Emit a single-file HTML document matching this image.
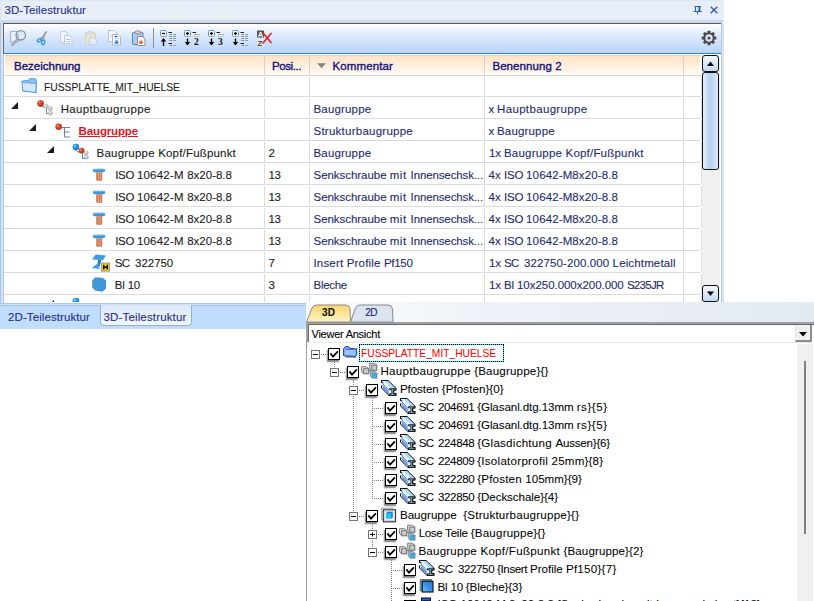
<!DOCTYPE html>
<html><head><meta charset="utf-8"><title>3D-Teilestruktur</title><style>
html,body{margin:0;padding:0;background:#fff;}
body{width:814px;height:601px;position:relative;overflow:hidden;font-family:"Liberation Sans",sans-serif;}
.t{position:absolute;white-space:pre;line-height:14px;height:14px;}
.ic{position:absolute;width:16px;height:16px;}
</style></head><body>
<svg width="0" height="0" style="position:absolute"><defs><linearGradient id="cy" x1="0" y1="1" x2="1" y2="0"><stop offset="0" stop-color="#08f0f0"/><stop offset=".55" stop-color="#30a8f4"/><stop offset="1" stop-color="#3a8cf0"/></linearGradient><linearGradient id="shg" x1="0" y1="1" x2="1" y2="0"><stop offset="0" stop-color="#62d6fa"/><stop offset=".5" stop-color="#3a8fe6"/><stop offset="1" stop-color="#2e78dc"/></linearGradient></defs></svg><div style="position:absolute;left:0px;top:0px;width:724px;height:304px;background:#e8eef7;"></div>
<div style="position:absolute;left:0px;top:0px;width:724px;height:1px;background:#dce6f4;"></div>
<div style="position:absolute;left:0px;top:20px;width:724px;height:3px;background:#c9daf0;"></div>
<div style="position:absolute;left:0px;top:1px;width:1px;height:22px;background:#dbe5f3;"></div>
<div style="position:absolute;left:0px;top:23px;width:1px;height:281px;background:#b0c8e8;"></div>
<div style="position:absolute;left:1px;top:23px;width:1px;height:281px;background:#cfdff0;"></div>
<div style="position:absolute;left:2px;top:23px;width:1px;height:281px;background:#dce9f8;"></div>
<div style="position:absolute;left:3px;top:23px;width:1px;height:281px;background:#a9cbe8;"></div>
<div style="position:absolute;left:721px;top:20px;width:1px;height:284px;background:#b0cdee;"></div>
<div style="position:absolute;left:722px;top:20px;width:2px;height:284px;background:#d5e2f0;"></div>
<div style="position:absolute;left:3px;top:23px;width:718px;height:31px;background:linear-gradient(#ffffff 0%,#e9f1fd 25%,#d3e3fa 55%,#b9d6fb 100%);border-top:1px solid #5a5a5a;border-left:1px solid #666;border-bottom:1px solid #3f7fb5;box-sizing:border-box;"></div>
<div style="position:absolute;left:4px;top:54px;width:717px;height:250px;background:#fff;"></div>
<div style="position:absolute;left:5px;top:55px;width:695px;height:20px;background:linear-gradient(#ffe2c4 0%,#fff0e0 55%,#fffaf5 100%);border-top:1px solid #d4d4d4;box-sizing:border-box;"></div>
<div style="position:absolute;left:264px;top:56px;width:1px;height:19px;background:#d6d2cc;"></div>
<div style="position:absolute;left:309px;top:56px;width:1px;height:19px;background:#d6d2cc;"></div>
<div style="position:absolute;left:484px;top:56px;width:1px;height:19px;background:#d6d2cc;"></div>
<div style="position:absolute;left:683px;top:56px;width:1px;height:19px;background:#d6d2cc;"></div>
<div style="position:absolute;left:4px;top:75px;width:697px;height:1px;background:#d9d9d9;"></div>
<div style="position:absolute;left:4px;top:96px;width:697px;height:1px;background:#dcdcdc;"></div>
<div style="position:absolute;left:4px;top:118px;width:697px;height:1px;background:#dcdcdc;"></div>
<div style="position:absolute;left:4px;top:140px;width:697px;height:1px;background:#dcdcdc;"></div>
<div style="position:absolute;left:4px;top:162px;width:697px;height:1px;background:#dcdcdc;"></div>
<div style="position:absolute;left:4px;top:184px;width:697px;height:1px;background:#dcdcdc;"></div>
<div style="position:absolute;left:4px;top:206px;width:697px;height:1px;background:#dcdcdc;"></div>
<div style="position:absolute;left:4px;top:228px;width:697px;height:1px;background:#dcdcdc;"></div>
<div style="position:absolute;left:4px;top:250px;width:697px;height:1px;background:#dcdcdc;"></div>
<div style="position:absolute;left:4px;top:272px;width:697px;height:1px;background:#dcdcdc;"></div>
<div style="position:absolute;left:4px;top:294px;width:697px;height:1px;background:#dcdcdc;"></div>
<div style="position:absolute;left:264px;top:77px;width:1px;height:19px;background:#dcdcdc;"></div>
<div style="position:absolute;left:309px;top:77px;width:1px;height:19px;background:#dcdcdc;"></div>
<div style="position:absolute;left:484px;top:77px;width:1px;height:19px;background:#dcdcdc;"></div>
<div style="position:absolute;left:683px;top:77px;width:1px;height:19px;background:#dcdcdc;"></div>
<div style="position:absolute;left:701px;top:77px;width:1px;height:19px;background:#dcdcdc;"></div>
<div style="position:absolute;left:264px;top:98px;width:1px;height:20px;background:#dcdcdc;"></div>
<div style="position:absolute;left:309px;top:98px;width:1px;height:20px;background:#dcdcdc;"></div>
<div style="position:absolute;left:484px;top:98px;width:1px;height:20px;background:#dcdcdc;"></div>
<div style="position:absolute;left:683px;top:98px;width:1px;height:20px;background:#dcdcdc;"></div>
<div style="position:absolute;left:701px;top:98px;width:1px;height:20px;background:#dcdcdc;"></div>
<div style="position:absolute;left:264px;top:120px;width:1px;height:20px;background:#dcdcdc;"></div>
<div style="position:absolute;left:309px;top:120px;width:1px;height:20px;background:#dcdcdc;"></div>
<div style="position:absolute;left:484px;top:120px;width:1px;height:20px;background:#dcdcdc;"></div>
<div style="position:absolute;left:683px;top:120px;width:1px;height:20px;background:#dcdcdc;"></div>
<div style="position:absolute;left:701px;top:120px;width:1px;height:20px;background:#dcdcdc;"></div>
<div style="position:absolute;left:264px;top:142px;width:1px;height:20px;background:#dcdcdc;"></div>
<div style="position:absolute;left:309px;top:142px;width:1px;height:20px;background:#dcdcdc;"></div>
<div style="position:absolute;left:484px;top:142px;width:1px;height:20px;background:#dcdcdc;"></div>
<div style="position:absolute;left:683px;top:142px;width:1px;height:20px;background:#dcdcdc;"></div>
<div style="position:absolute;left:701px;top:142px;width:1px;height:20px;background:#dcdcdc;"></div>
<div style="position:absolute;left:264px;top:164px;width:1px;height:20px;background:#dcdcdc;"></div>
<div style="position:absolute;left:309px;top:164px;width:1px;height:20px;background:#dcdcdc;"></div>
<div style="position:absolute;left:484px;top:164px;width:1px;height:20px;background:#dcdcdc;"></div>
<div style="position:absolute;left:683px;top:164px;width:1px;height:20px;background:#dcdcdc;"></div>
<div style="position:absolute;left:701px;top:164px;width:1px;height:20px;background:#dcdcdc;"></div>
<div style="position:absolute;left:264px;top:186px;width:1px;height:20px;background:#dcdcdc;"></div>
<div style="position:absolute;left:309px;top:186px;width:1px;height:20px;background:#dcdcdc;"></div>
<div style="position:absolute;left:484px;top:186px;width:1px;height:20px;background:#dcdcdc;"></div>
<div style="position:absolute;left:683px;top:186px;width:1px;height:20px;background:#dcdcdc;"></div>
<div style="position:absolute;left:701px;top:186px;width:1px;height:20px;background:#dcdcdc;"></div>
<div style="position:absolute;left:264px;top:208px;width:1px;height:20px;background:#dcdcdc;"></div>
<div style="position:absolute;left:309px;top:208px;width:1px;height:20px;background:#dcdcdc;"></div>
<div style="position:absolute;left:484px;top:208px;width:1px;height:20px;background:#dcdcdc;"></div>
<div style="position:absolute;left:683px;top:208px;width:1px;height:20px;background:#dcdcdc;"></div>
<div style="position:absolute;left:701px;top:208px;width:1px;height:20px;background:#dcdcdc;"></div>
<div style="position:absolute;left:264px;top:230px;width:1px;height:20px;background:#dcdcdc;"></div>
<div style="position:absolute;left:309px;top:230px;width:1px;height:20px;background:#dcdcdc;"></div>
<div style="position:absolute;left:484px;top:230px;width:1px;height:20px;background:#dcdcdc;"></div>
<div style="position:absolute;left:683px;top:230px;width:1px;height:20px;background:#dcdcdc;"></div>
<div style="position:absolute;left:701px;top:230px;width:1px;height:20px;background:#dcdcdc;"></div>
<div style="position:absolute;left:264px;top:252px;width:1px;height:20px;background:#dcdcdc;"></div>
<div style="position:absolute;left:309px;top:252px;width:1px;height:20px;background:#dcdcdc;"></div>
<div style="position:absolute;left:484px;top:252px;width:1px;height:20px;background:#dcdcdc;"></div>
<div style="position:absolute;left:683px;top:252px;width:1px;height:20px;background:#dcdcdc;"></div>
<div style="position:absolute;left:701px;top:252px;width:1px;height:20px;background:#dcdcdc;"></div>
<div style="position:absolute;left:264px;top:274px;width:1px;height:20px;background:#dcdcdc;"></div>
<div style="position:absolute;left:309px;top:274px;width:1px;height:20px;background:#dcdcdc;"></div>
<div style="position:absolute;left:484px;top:274px;width:1px;height:20px;background:#dcdcdc;"></div>
<div style="position:absolute;left:683px;top:274px;width:1px;height:20px;background:#dcdcdc;"></div>
<div style="position:absolute;left:701px;top:274px;width:1px;height:20px;background:#dcdcdc;"></div>
<div style="position:absolute;left:264px;top:296px;width:1px;height:6px;background:#dcdcdc;"></div>
<div style="position:absolute;left:309px;top:296px;width:1px;height:6px;background:#dcdcdc;"></div>
<div style="position:absolute;left:484px;top:296px;width:1px;height:6px;background:#dcdcdc;"></div>
<div style="position:absolute;left:683px;top:296px;width:1px;height:6px;background:#dcdcdc;"></div>
<div style="position:absolute;left:701px;top:296px;width:1px;height:6px;background:#dcdcdc;"></div>
<div style="position:absolute;left:702px;top:55px;width:18px;height:249px;background:#f0f0f0;"></div>
<div style="position:absolute;left:702px;top:55px;width:17px;height:17px;background:linear-gradient(#f4f8fe,#c4d8f2);border:1.5px solid #111;border-radius:3px;box-sizing:border-box;"></div>
<div style="position:absolute;left:702px;top:72px;width:17px;height:98px;background:linear-gradient(90deg,#e6f0fc,#b4cfee 45%,#dce9fa);border:1.5px solid #111;border-radius:3px;box-sizing:border-box;"></div>
<div style="position:absolute;left:702px;top:285px;width:17px;height:17px;background:linear-gradient(#f4f8fe,#c4d8f2);border:1.5px solid #111;border-radius:3px;box-sizing:border-box;"></div>
<svg style="position:absolute;left:702px;top:55px" width="17" height="17"><path d="M5 11 L12 11 L8.5 6.5 Z" fill="#000"/></svg>
<svg style="position:absolute;left:702px;top:285px" width="17" height="17"><path d="M5 6.5 L12 6.5 L8.5 11 Z" fill="#000"/></svg>
<div style="position:absolute;left:0px;top:303px;width:306px;height:26px;background:#c0dcff;"></div>
<div style="position:absolute;left:0px;top:303px;width:306px;height:1px;background:#a9cbe8;"></div>
<div style="position:absolute;left:0px;top:304px;width:306px;height:1px;background:#d0e2f4;"></div>
<div style="position:absolute;left:0px;top:305px;width:306px;height:1px;background:#a4c4ea;"></div>
<div style="position:absolute;left:100px;top:305px;width:92px;height:21px;background:linear-gradient(#dbe7f7,#f2f6fc);border:1px solid #8fb0da;border-top:none;border-radius:0 0 4px 4px;box-sizing:border-box;"></div>
<div style="position:absolute;left:306px;top:302px;width:508px;height:20px;background:linear-gradient(90deg,#fbfcfe 0%,#eef2f8 35%,#e3e9f3 100%);"></div>
<div style="position:absolute;left:308px;top:325px;width:506px;height:276px;background:#fff;"></div>
<div style="position:absolute;left:306px;top:322px;width:508px;height:2px;background:#a0a0a0;"></div>
<div style="position:absolute;left:308px;top:324px;width:506px;height:1px;background:#696969;"></div>
<div style="position:absolute;left:306px;top:322px;width:2px;height:20px;background:#a0a0a0;"></div>
<div style="position:absolute;left:308px;top:324px;width:1px;height:18px;background:#696969;"></div>
<div style="position:absolute;left:306px;top:342px;width:1px;height:259px;background:#a0a0a0;"></div>
<div style="position:absolute;left:307px;top:342px;width:507px;height:259px;background:#fff;"></div>
<div style="position:absolute;left:309px;top:342px;width:503px;height:1px;background:#e6e6e6;"></div>
<div style="position:absolute;left:795px;top:325px;width:17px;height:17px;background:#f0f0f0;border-right:2px solid #8c8c8c;border-bottom:2px solid #8c8c8c;border-left:1px solid #e3e3e3;box-sizing:border-box;"></div>
<svg style="position:absolute;left:795px;top:325px" width="16" height="17"><path d="M4 7 L12 7 L8 11.5 Z" fill="#000"/></svg>
<div style="position:absolute;left:797px;top:344px;width:16px;height:257px;background:#f0f0f0;"></div>
<div style="position:absolute;left:804px;top:361px;width:2px;height:173px;background:#808080;"></div>
<svg style="position:absolute;left:306px;top:302px" width="100" height="21">
<defs><linearGradient id="g3" x1="0" y1="0" x2="0" y2="1"><stop offset="0" stop-color="#fbd56a"/><stop offset="1" stop-color="#fff3c8"/></linearGradient></defs>
<path d="M44.5 20 L49.5 6 Q50.5 3 54 3 L82 3 Q86 3 86.5 7 L87 20 Z" fill="#dbe4f1" stroke="#8a8a8a" stroke-width="1"/>
<path d="M0.5 20 L6 6 Q7 3 10.5 3 L40 3 Q43.5 3 44 7 L44.5 20 Z" fill="url(#g3)" stroke="#8a8a8a" stroke-width="1"/>
</svg>
<svg style="position:absolute;left:10px;top:30px;overflow:visible" width="16" height="16" viewBox="0 0 16 16" ><rect x="0.5" y="1.5" width="8" height="10.5" fill="#e6eefb" stroke="#9fb3de" stroke-width="1"/><circle cx="10.800" cy="5.300" r="4.700" fill="#dce9fb" fill-opacity=".75" stroke="#8c8c8c" stroke-width="1.3"/><path d="M8 4 V8" stroke="#7f9fe0" stroke-width="1"/><path d="M7.2 9.4 L2.4 15" stroke="#8a8a8a" stroke-width="2.2" stroke-linecap="round"/><path d="M7.2 9.4 L2.4 15" stroke="#d8d8d8" stroke-width=".8" stroke-linecap="round"/></svg>
<svg style="position:absolute;left:34px;top:30px;overflow:visible" width="16" height="16" viewBox="0 0 16 16" ><path d="M12.600 1.300 L6.900 9.800" stroke="#8d8d8d" stroke-width="1.500"/><path d="M10.900 2.800 L9.600 10.300" stroke="#a2a2a2" stroke-width="1.200"/><ellipse cx="5.400" cy="10.200" rx="2.300" ry="1.400" transform="rotate(-28 5.400 10.200)" fill="none" stroke="#2f93d8" stroke-width="1.300"/><ellipse cx="9.200" cy="12.400" rx="1.500" ry="2.300" transform="rotate(14 9.200 12.400)" fill="none" stroke="#2f93d8" stroke-width="1.300"/></svg>
<svg style="position:absolute;left:58px;top:30px;overflow:visible" width="16" height="16" viewBox="0 0 16 16" ><path d="M2.5 1.5 h5 l2.5 2.5 v8 h-7.5z" fill="#f1f4fa" stroke="#c6cfde"/><path d="M6.5 5.5 h5 l2.5 2.5 v7 h-7.5z" fill="#f6f8fc" stroke="#c2cbdb"/><path d="M8 9.5h4.5M8 11.5h4.5M8 13.5h4.5" stroke="#b7c7e3" stroke-width="1"/></svg>
<svg style="position:absolute;left:82px;top:30px;overflow:visible" width="16" height="16" viewBox="0 0 16 16" ><rect x="3.5" y="2.5" width="10" height="11.5" rx="1" fill="#e9e4d2" stroke="#d8d2bd"/><rect x="6" y="1.2" width="5" height="2.6" rx="1" fill="#dfe5ee" stroke="#c8d0dc" stroke-width=".8"/><path d="M7.5 7.5 h4.5 l2.5 2.5 v4.5 h-7z" fill="#e6ecf7" stroke="#c9d3e6"/></svg>
<svg style="position:absolute;left:106px;top:30px;overflow:visible" width="16" height="16" viewBox="0 0 16 16" ><path d="M2.5 0.5 h5.5 l2.5 2.5 v8.5 h-8z" fill="#f8fafd" stroke="#b8c2d4"/><path d="M4 4.5h4M4 6.5h4" stroke="#c8d6ee"/><path d="M6.5 4.5 h5.5 l2.500 2.5 v8 h-8z" fill="#fdfdfe" stroke="#aeb9cd"/><path d="M8.5 6.5h3" stroke="#2a50b8" stroke-width="1.3"/><path d="M8.5 8.5h4.5" stroke="#c2d3ee"/><circle cx="10.5" cy="12.2" r="1.900" fill="#1f8fd6"/><circle cx="10" cy="11.4" r=".9" fill="#6cc1f0"/></svg>
<svg style="position:absolute;left:130px;top:30px;overflow:visible" width="16" height="16" viewBox="0 0 16 16" ><rect x="2.500" y="2.5" width="10.5" height="12" rx="1.2" fill="#a9c9f3" stroke="#4a86c8"/><rect x="5" y="1" width="5.5" height="2.8" rx="1" fill="#e6d9c8" stroke="#8c7a66" stroke-width=".8"/><path d="M7.5 6.5 h5 l2.500 2.5 v6.5 h-7.5z" fill="#fdfdfd" stroke="#9d8f88"/><circle cx="11" cy="12.200" r="1.800" fill="#e2561e"/><circle cx="10.5" cy="11.4" r=".8" fill="#f59a6a"/></svg>
<div style="position:absolute;left:153px;top:28px;width:1px;height:20px;background:#8d8d8d;"></div>
<svg style="position:absolute;left:160px;top:30px;overflow:visible" width="16" height="16" viewBox="0 0 16 16" ><rect x="0.5" y="0.5" width="6" height="6" rx="1" fill="#fff" stroke="#5b9bd5"/><path d="M0.8 5.8h5.4" stroke="#e6d9a8" stroke-width=".8"/><path d="M2 3.500h3" stroke="#000" stroke-width="1.3"/><path d="M3.500 16V9.500" stroke="#000" stroke-width="1.400"/><path d="M0.8 11.600L3.500 8L6.200 11.600z" fill="#000"/><path d="M8.5 2.500h3.500" stroke="#222" stroke-width="1"/><path d="M9.5 4.5h2.500" stroke="#8f80ac" stroke-width="1"/><path d="M13 4.5h3" stroke="#80a893" stroke-width="1"/><path d="M9.5 6.5h2.500" stroke="#8f80ac" stroke-width="1"/><path d="M13 6.5h3" stroke="#80a893" stroke-width="1"/><path d="M9.5 8.5h2.500" stroke="#8f80ac" stroke-width="1"/><path d="M13 8.5h3" stroke="#80a893" stroke-width="1"/><path d="M9.5 10.5h2.500" stroke="#8f80ac" stroke-width="1"/><path d="M13 10.5h3" stroke="#80a893" stroke-width="1"/><path d="M8.5 13.500h3.500" stroke="#222" stroke-width="1"/><path d="M9.5 15.5h2.500" stroke="#8f80ac" stroke-width="1"/><path d="M13 15.5h3" stroke="#8b9fc8" stroke-width="1"/></svg>
<svg style="position:absolute;left:184px;top:30px;overflow:visible" width="16" height="16" viewBox="0 0 16 16" ><rect x="0.5" y="0.5" width="6" height="6" rx="1" fill="#fff" stroke="#5b9bd5"/><path d="M0.8 5.8h5.4" stroke="#e6d9a8" stroke-width=".8"/><path d="M2 3.500h3" stroke="#000" stroke-width="1.3"/><path d="M3.500 2v3" stroke="#000" stroke-width="1.300"/><path d="M3.500 8.500V14" stroke="#000" stroke-width="1.400"/><path d="M0.800 12L3.500 15.600L6.200 12z" fill="#000"/><path d="M8.5 2.500h3.500" stroke="#222" stroke-width="1"/><path d="M10 4.500h2.500" stroke="#a99cc6" stroke-width="1"/><path d="M13 4.500h3" stroke="#a5c8b5" stroke-width="1"/><path d="M10 6.500h2.500" stroke="#c5bcd9" stroke-width="1"/><path d="M13 6.500h3" stroke="#c0d8cb" stroke-width="1"/><text x="10" y="14.600" font-family="Liberation Serif,serif" font-weight="bold" font-size="9.500" fill="#111">2</text></svg>
<svg style="position:absolute;left:208px;top:30px;overflow:visible" width="16" height="16" viewBox="0 0 16 16" ><rect x="0.5" y="0.5" width="6" height="6" rx="1" fill="#fff" stroke="#5b9bd5"/><path d="M0.8 5.8h5.4" stroke="#e6d9a8" stroke-width=".8"/><path d="M2 3.500h3" stroke="#000" stroke-width="1.3"/><path d="M3.500 2v3" stroke="#000" stroke-width="1.300"/><path d="M3.500 8.500V14" stroke="#000" stroke-width="1.400"/><path d="M0.800 12L3.500 15.600L6.200 12z" fill="#000"/><path d="M8.5 2.500h3.500" stroke="#222" stroke-width="1"/><path d="M10 4.500h2.500" stroke="#a99cc6" stroke-width="1"/><path d="M13 4.500h3" stroke="#a5c8b5" stroke-width="1"/><path d="M10 6.500h2.500" stroke="#c5bcd9" stroke-width="1"/><path d="M13 6.500h3" stroke="#c0d8cb" stroke-width="1"/><text x="10" y="14.600" font-family="Liberation Serif,serif" font-weight="bold" font-size="9.500" fill="#111">3</text></svg>
<svg style="position:absolute;left:232px;top:30px;overflow:visible" width="16" height="16" viewBox="0 0 16 16" ><rect x="0.5" y="0.5" width="6" height="6" rx="1" fill="#fff" stroke="#5b9bd5"/><path d="M0.8 5.8h5.4" stroke="#e6d9a8" stroke-width=".8"/><path d="M2 3.500h3" stroke="#000" stroke-width="1.3"/><path d="M3.500 2v3" stroke="#000" stroke-width="1.300"/><path d="M3.500 8.500V14" stroke="#000" stroke-width="1.400"/><path d="M0.800 12L3.500 15.600L6.200 12z" fill="#000"/><path d="M8.5 2.500h3.500" stroke="#222" stroke-width="1"/><path d="M9.5 4.5h2.500" stroke="#8f80ac" stroke-width="1"/><path d="M13 4.5h3" stroke="#80a893" stroke-width="1"/><path d="M9.5 6.5h2.500" stroke="#8f80ac" stroke-width="1"/><path d="M13 6.5h3" stroke="#80a893" stroke-width="1"/><path d="M9.5 8.5h2.500" stroke="#8f80ac" stroke-width="1"/><path d="M13 8.5h3" stroke="#80a893" stroke-width="1"/><path d="M9.5 10.5h2.500" stroke="#8f80ac" stroke-width="1"/><path d="M13 10.5h3" stroke="#80a893" stroke-width="1"/><path d="M8.5 13.500h3.500" stroke="#222" stroke-width="1"/><path d="M9.5 15.5h2.500" stroke="#8f80ac" stroke-width="1"/><path d="M13 15.5h3" stroke="#8b9fc8" stroke-width="1"/></svg>
<svg style="position:absolute;left:256px;top:30px;overflow:visible" width="16" height="16" viewBox="0 0 16 16" ><rect x="1" y="0.5" width="7" height="7" fill="#555"/><text x="1.700" y="6.800" font-family="Liberation Sans,sans-serif" font-weight="bold" font-size="7.500" fill="#fff">A</text><rect x="1" y="9.500" width="7" height="6.500" fill="#ececec"/><text x="1.600" y="15.600" font-family="Liberation Sans,sans-serif" font-weight="bold" font-size="8" fill="#444">Z</text><path d="M7.500 3.500L15 12.500M15 3.500L7 13" stroke="#d8282c" stroke-width="1.700" stroke-linecap="round"/></svg>
<svg style="position:absolute;left:701px;top:30px;overflow:visible" width="16" height="16" viewBox="0 0 16 16" ><g transform="translate(8 8)"><rect x="-1.500" y="-7.300" width="3" height="3" rx=".6" fill="#4a4a4a" transform="rotate(0)"/><rect x="-1.500" y="-7.300" width="3" height="3" rx=".6" fill="#4a4a4a" transform="rotate(45)"/><rect x="-1.500" y="-7.300" width="3" height="3" rx=".6" fill="#4a4a4a" transform="rotate(90)"/><rect x="-1.500" y="-7.300" width="3" height="3" rx=".6" fill="#4a4a4a" transform="rotate(135)"/><rect x="-1.500" y="-7.300" width="3" height="3" rx=".6" fill="#4a4a4a" transform="rotate(180)"/><rect x="-1.500" y="-7.300" width="3" height="3" rx=".6" fill="#4a4a4a" transform="rotate(225)"/><rect x="-1.500" y="-7.300" width="3" height="3" rx=".6" fill="#4a4a4a" transform="rotate(270)"/><rect x="-1.500" y="-7.300" width="3" height="3" rx=".6" fill="#4a4a4a" transform="rotate(315)"/><circle r="4.700" fill="none" stroke="#4a4a4a" stroke-width="2"/><circle r="1.500" fill="#4a4a4a"/></g></svg>
<svg style="position:absolute;left:693px;top:5px;overflow:visible" width="9" height="10" viewBox="0 0 9 10" ><path d="M1.500 1.500H8M2.500 1.500V6M6 1.500V6M6.800 1.500V6M0.500 6.500H8.800M4.500 6.500V9.200" fill="none" stroke="#2f5fa8" stroke-width="1.100"/></svg>
<svg style="position:absolute;left:710px;top:6px;overflow:visible" width="8" height="8" viewBox="0 0 8 8" ><path d="M0.700 0.700L7.300 7.300M7.300 0.700L0.700 7.300" stroke="#2f5fa8" stroke-width="1.400"/></svg>
<svg style="position:absolute;left:317px;top:63px;overflow:visible" width="9" height="5" viewBox="0 0 9 5" ><path d="M0 0.200H9L4.500 5.200Z" fill="#858585"/></svg>
<svg style="position:absolute;left:11px;top:102px;overflow:visible" width="7" height="7" viewBox="0 0 7 7" ><path d="M0 7H7V0Z" fill="#1a1a1a"/></svg>
<svg style="position:absolute;left:29px;top:124px;overflow:visible" width="7" height="7" viewBox="0 0 7 7" ><path d="M0 7H7V0Z" fill="#1a1a1a"/></svg>
<svg style="position:absolute;left:47px;top:146px;overflow:visible" width="7" height="7" viewBox="0 0 7 7" ><path d="M0 7H7V0Z" fill="#1a1a1a"/></svg>
<svg style="position:absolute;left:21px;top:78px;overflow:visible" width="16" height="16" viewBox="0 0 16 16" ><path d="M0.800 3.200 L7 2.400 L9 0.600 L14.800 1.000 L15.400 3.600 L15.200 14.600 L1.800 13 Z" fill="#8cc0ee" stroke="#4a9be0" stroke-width="1" stroke-linejoin="round"/><path d="M1.500 4.600 L14.300 5.400 L14.300 13.700 L2.300 12.300 Z" fill="#d6e8f8"/><path d="M1.500 4.600 L14.300 5.400" stroke="#5aa5e4" stroke-width=".8"/></svg>
<svg style="position:absolute;left:37px;top:99px;overflow:visible" width="16" height="16" viewBox="0 0 16 16" ><path d="M4 6.500 L7 8.200 L9.500 8.200 M9.500 8.200 V14.500 H13" fill="none" stroke="#6f86a8" stroke-width="1"/><circle cx="9.2" cy="7.4" r="2.4" fill="#b4b4b4"/><circle cx="8.84" cy="6.92" r="1.73" fill="#cfcfcf"/><circle cx="8.48" cy="6.49" r="0.77" fill="#ececec"/><circle cx="13.4" cy="9.6" r="2.4" fill="#b4b4b4"/><circle cx="13.04" cy="9.12" r="1.73" fill="#cfcfcf"/><circle cx="12.68" cy="8.69" r="0.77" fill="#ececec"/><circle cx="13.4" cy="14" r="2.4" fill="#b4b4b4"/><circle cx="13.04" cy="13.52" r="1.73" fill="#cfcfcf"/><circle cx="12.68" cy="13.09" r="0.77" fill="#ececec"/><circle cx="3.6" cy="4.6" r="3.3" fill="#b93a22"/><circle cx="3.10" cy="3.94" r="2.38" fill="#e0482c"/><circle cx="2.61" cy="3.35" r="1.06" fill="#f08a6e"/></svg>
<svg style="position:absolute;left:55px;top:122px;overflow:visible" width="16" height="16" viewBox="0 0 16 16" ><path d="M6 5.500H15 M9.500 5.500V15 M9.500 10H14.500 M9.500 15H15" fill="none" stroke="#6a82a8" stroke-width="1.100"/><circle cx="3.7" cy="4.7" r="3.3" fill="#b93a22"/><circle cx="3.21" cy="4.04" r="2.38" fill="#e0482c"/><circle cx="2.71" cy="3.45" r="1.06" fill="#f08a6e"/></svg>
<svg style="position:absolute;left:72px;top:143px;overflow:visible" width="16" height="16" viewBox="0 0 16 16" ><path d="M4 7 L6 9 H9 M10.500 9 V15.500 H14" fill="none" stroke="#6f86a8" stroke-width="1"/><circle cx="14.3" cy="9.8" r="2.4" fill="#b4b4b4"/><circle cx="13.94" cy="9.32" r="1.73" fill="#cfcfcf"/><circle cx="13.58" cy="8.89" r="0.77" fill="#ececec"/><circle cx="14.3" cy="14.2" r="2.4" fill="#b4b4b4"/><circle cx="13.94" cy="13.72" r="1.73" fill="#cfcfcf"/><circle cx="13.58" cy="13.29" r="0.77" fill="#ececec"/><circle cx="9.6" cy="7.6" r="2.9" fill="#b93a22"/><circle cx="9.16" cy="7.02" r="2.09" fill="#e0482c"/><circle cx="8.73" cy="6.50" r="0.93" fill="#f08a6e"/><circle cx="3.9" cy="4.1" r="3.3" fill="#1f7ccc"/><circle cx="3.40" cy="3.44" r="2.38" fill="#2f9ee8"/><circle cx="2.91" cy="2.85" r="1.06" fill="#8fd0f8"/></svg>
<svg style="position:absolute;left:92px;top:168px;overflow:visible" width="14" height="13" viewBox="0 0 14 13" ><path d="M0.900 1.800 Q1.200 0.700 2.500 0.700 H11.500 Q12.900 0.700 13.100 1.800 V3.600 L10.400 4.600 H3.900 L0.900 3.600 Z" fill="#3f97dc"/><path d="M2 1.600h3.500M7 1.400h2.500M10.800 1.700h1.600" stroke="#8cc6f0" stroke-width=".8"/><rect x="4.200" y="4.500" width="6" height="8.200" rx=".8" fill="#d98a62"/><path d="M5.300 4.600v8M7.200 4.600v8M9.100 4.600v8" stroke="#b9623c" stroke-width=".8"/><path d="M6.200 4.600v8M8.200 4.600v8" stroke="#efb99a" stroke-width=".7"/></svg>
<svg style="position:absolute;left:92px;top:190px;overflow:visible" width="14" height="13" viewBox="0 0 14 13" ><path d="M0.900 1.800 Q1.200 0.700 2.500 0.700 H11.500 Q12.900 0.700 13.100 1.800 V3.600 L10.400 4.600 H3.900 L0.900 3.600 Z" fill="#3f97dc"/><path d="M2 1.600h3.500M7 1.400h2.500M10.800 1.700h1.600" stroke="#8cc6f0" stroke-width=".8"/><rect x="4.200" y="4.500" width="6" height="8.200" rx=".8" fill="#d98a62"/><path d="M5.300 4.600v8M7.200 4.600v8M9.100 4.600v8" stroke="#b9623c" stroke-width=".8"/><path d="M6.200 4.600v8M8.200 4.600v8" stroke="#efb99a" stroke-width=".7"/></svg>
<svg style="position:absolute;left:92px;top:212px;overflow:visible" width="14" height="13" viewBox="0 0 14 13" ><path d="M0.900 1.800 Q1.200 0.700 2.500 0.700 H11.500 Q12.900 0.700 13.100 1.800 V3.600 L10.400 4.600 H3.900 L0.900 3.600 Z" fill="#3f97dc"/><path d="M2 1.600h3.500M7 1.400h2.500M10.800 1.700h1.600" stroke="#8cc6f0" stroke-width=".8"/><rect x="4.200" y="4.500" width="6" height="8.200" rx=".8" fill="#d98a62"/><path d="M5.300 4.600v8M7.200 4.600v8M9.100 4.600v8" stroke="#b9623c" stroke-width=".8"/><path d="M6.200 4.600v8M8.200 4.600v8" stroke="#efb99a" stroke-width=".7"/></svg>
<svg style="position:absolute;left:92px;top:234px;overflow:visible" width="14" height="13" viewBox="0 0 14 13" ><path d="M0.900 1.800 Q1.200 0.700 2.500 0.700 H11.500 Q12.900 0.700 13.100 1.800 V3.600 L10.400 4.600 H3.900 L0.900 3.600 Z" fill="#3f97dc"/><path d="M2 1.600h3.500M7 1.400h2.500M10.800 1.700h1.600" stroke="#8cc6f0" stroke-width=".8"/><rect x="4.200" y="4.500" width="6" height="8.200" rx=".8" fill="#d98a62"/><path d="M5.300 4.600v8M7.200 4.600v8M9.100 4.600v8" stroke="#b9623c" stroke-width=".8"/><path d="M6.200 4.600v8M8.200 4.600v8" stroke="#efb99a" stroke-width=".7"/></svg>
<svg style="position:absolute;left:91px;top:254px;overflow:visible" width="16" height="16" viewBox="0 0 16 16" ><path d="M4.700 0.600 L15 1.500 L12 6 L1 5.500 Z" fill="#3d9be0"/><path d="M6.800 5.700 L10.300 5.900 L8.600 13 L6.800 11.500 Z" fill="#2377bf"/><path d="M6.300 9.500 L8 13.500 L9.500 15 L1 14 Z" fill="#3d9be0"/><rect x="10.500" y="9" width="8" height="8.200" fill="#f2c81e" stroke="#9a9a82" stroke-width=".9"/><path d="M12.700 10.800v4.800M16.300 10.800v4.800M12.700 13.200h3.600" stroke="#111" stroke-width="1.400"/></svg>
<svg style="position:absolute;left:92px;top:277px;overflow:visible" width="14" height="15" viewBox="0 0 14 15" ><path d="M3.500 0.300 L11 0.900 L14 3.500 L14 11.500 L10.500 14.800 L3.500 13.800 L0.200 10.500 L0.200 3.300 Z" fill="#3f97d8"/></svg>
<div style="position:absolute;left:4px;top:295px;width:697px;height:7px;overflow:hidden;"><svg style="position:absolute;left:43px;top:5px;overflow:visible" width="7" height="7" viewBox="0 0 7 7" ><path d="M0 7H7V0Z" fill="#1a1a1a"/></svg><svg style="position:absolute;left:68px;top:2px;overflow:visible" width="16" height="16" viewBox="0 0 16 16" ><circle cx="3.9" cy="4.1" r="3.3" fill="#1f7ccc"/><circle cx="3.40" cy="3.44" r="2.38" fill="#2f9ee8"/><circle cx="2.91" cy="2.85" r="1.06" fill="#8fd0f8"/></svg></div>
<svg style="position:absolute;left:311px;top:350px" width="9" height="9"><rect x="0.5" y="0.5" width="8" height="8" fill="#fff" stroke="#757575"/><path d="M2 4.5 H7" stroke="#000" stroke-width="1"/></svg>
<div style="position:absolute;left:321px;top:354px;width:5px;height:1px;background:repeating-linear-gradient(90deg,#808080 0 1px,transparent 1px 2px);"></div>
<div style="position:absolute;left:328px;top:348px;width:12px;height:12px;box-sizing:border-box;border:1.2px solid #000;background:#fff;box-shadow:-1.5px 1.5px 1.2px rgba(0,0,0,.5);"><svg style="position:absolute;left:-1.2px;top:-1.2px" width="12" height="12"><path d="M2.4 5.4 L5 8.6 L9.9 3.3" fill="none" stroke="#000" stroke-width="1.7"/></svg></div>
<svg style="position:absolute;left:343px;top:346px;overflow:visible" width="16" height="16" viewBox="0 0 16 16" ><path d="M0.600 2.800 L2.200 0.700 L5.800 0.700 L6.800 2.400 L11.500 2.400 L12 3.200 L13.600 2.600 L13.800 9.200 L12.300 10.200 L12.300 11 L10.500 10.800 L9.500 10.200 L2.500 10.200 L0.600 9.600 Z" fill="#7fb2f6" stroke="#1a34c4" stroke-width="1" stroke-linejoin="round"/><path d="M2.600 3.800 H11.200 L12 5 V8 L11.200 9 H2.600 L1.800 8 V5 Z" fill="#9cc4fa"/><path d="M2.600 3.300 H11.400" stroke="#3a5cd0" stroke-width="1"/><path d="M3 11.200 H12.800" stroke="#222" stroke-opacity=".55" stroke-width="1"/></svg>
<svg style="position:absolute;left:330px;top:368px" width="9" height="9"><rect x="0.5" y="0.5" width="8" height="8" fill="#fff" stroke="#757575"/><path d="M2 4.5 H7" stroke="#000" stroke-width="1"/></svg>
<div style="position:absolute;left:340px;top:372px;width:5px;height:1px;background:repeating-linear-gradient(90deg,#808080 0 1px,transparent 1px 2px);"></div>
<div style="position:absolute;left:347px;top:366px;width:12px;height:12px;box-sizing:border-box;border:1.2px solid #000;background:#fff;box-shadow:-1.5px 1.5px 1.2px rgba(0,0,0,.5);"><svg style="position:absolute;left:-1.2px;top:-1.2px" width="12" height="12"><path d="M2.4 5.4 L5 8.6 L9.9 3.3" fill="none" stroke="#000" stroke-width="1.7"/></svg></div>
<svg style="position:absolute;left:361px;top:363px;overflow:visible" width="16" height="16" viewBox="0 0 16 16" ><path d="M7.600 7 L9.800 7.600 M9 6.500 L10 9" stroke="#8a8a8a" stroke-width="1.300"/><path d="M0.6 3.7 h5.0 l2.0 2.0 v5.0 h-5.0 l-2.0 -2.0 z" fill="#dedede" stroke="#7a7a7a" stroke-width="1" stroke-linejoin="round"/><rect x="2.6" y="5.7" width="5.0" height="5.0" fill="#cacaca" stroke="#7a7a7a" stroke-width="1"/><path d="M8.7 0.2 h5.0 l2.0 2.0 v5.0 h-5.0 l-2.0 -2.0 z" fill="#dedede" stroke="#7a7a7a" stroke-width="1" stroke-linejoin="round"/><rect x="10.7" y="2.2" width="5.0" height="5.0" fill="#cacaca" stroke="#7a7a7a" stroke-width="1"/><path d="M9.2 8.3 h4.6 l2.0 2.0 v4.6 h-4.6 l-2.0 -2.0 z" fill="#7fd0fa" stroke="#7f8a94" stroke-width="1" stroke-linejoin="round"/><rect x="11.2" y="10.3" width="4.6" height="4.6" fill="url(#cy)" stroke="#7f8a94" stroke-width="1"/></svg>
<svg style="position:absolute;left:349px;top:386px" width="9" height="9"><rect x="0.5" y="0.5" width="8" height="8" fill="#fff" stroke="#757575"/><path d="M2 4.5 H7" stroke="#000" stroke-width="1"/></svg>
<div style="position:absolute;left:359px;top:390px;width:5px;height:1px;background:repeating-linear-gradient(90deg,#808080 0 1px,transparent 1px 2px);"></div>
<div style="position:absolute;left:366px;top:384px;width:12px;height:12px;box-sizing:border-box;border:1.2px solid #000;background:#fff;box-shadow:-1.5px 1.5px 1.2px rgba(0,0,0,.5);"><svg style="position:absolute;left:-1.2px;top:-1.2px" width="12" height="12"><path d="M2.4 5.4 L5 8.6 L9.9 3.3" fill="none" stroke="#000" stroke-width="1.7"/></svg></div>
<svg style="position:absolute;left:381px;top:380px;overflow:visible" width="16" height="16" viewBox="0 0 16 16" ><path d="M0.500 0.500 H7 L15 8.500 V10 H12.800 V13.500 H15 V15.500 H8.200 L0.500 7.800 V6 L1.800 6 L1.800 2.500 L0.500 2.500 Z" fill="#fff" stroke="#111" stroke-width="1.050" stroke-linejoin="miter"/><path d="M1 1 H7 L14.500 8.500 H8.500 Z" fill="#a6dcf8"/><path d="M3.500 1 L11 8.500 H8.500 L1 1 Z" fill="#e8f6fd"/><path d="M1 2.500 L8.300 9.800 V15 L1 7.700 Z" fill="#fff"/><path d="M1.500 3.500 L8 10.300 M1.500 5 L8 11.800 M1.500 6.500 L8 13.300 M2 8.200 L8 14.600" stroke="#3a78d8" stroke-width="0.950"/><path d="M8.500 8.700 H14.700 V9.800 H12.400 V13.700 H14.700 V15.200 H8.500 V13.700 H10.800 V9.800 H8.500 Z" fill="#8fd3f6" stroke="#000" stroke-width=".8"/></svg>
<div style="position:absolute;left:374px;top:408px;width:9px;height:1px;background:repeating-linear-gradient(90deg,#808080 0 1px,transparent 1px 2px);"></div>
<div style="position:absolute;left:385px;top:402px;width:12px;height:12px;box-sizing:border-box;border:1.2px solid #000;background:#fff;box-shadow:-1.5px 1.5px 1.2px rgba(0,0,0,.5);"><svg style="position:absolute;left:-1.2px;top:-1.2px" width="12" height="12"><path d="M2.4 5.4 L5 8.6 L9.9 3.3" fill="none" stroke="#000" stroke-width="1.7"/></svg></div>
<svg style="position:absolute;left:400px;top:398px;overflow:visible" width="16" height="16" viewBox="0 0 16 16" ><path d="M0.500 0.500 H7 L15 8.500 V10 H12.800 V13.500 H15 V15.500 H8.200 L0.500 7.800 V6 L1.800 6 L1.800 2.500 L0.500 2.500 Z" fill="#fff" stroke="#111" stroke-width="1.050" stroke-linejoin="miter"/><path d="M1 1 H7 L14.500 8.500 H8.500 Z" fill="#a6dcf8"/><path d="M3.500 1 L11 8.500 H8.500 L1 1 Z" fill="#e8f6fd"/><path d="M1 2.500 L8.300 9.800 V15 L1 7.700 Z" fill="#fff"/><path d="M1.500 3.500 L8 10.300 M1.500 5 L8 11.800 M1.500 6.500 L8 13.300 M2 8.200 L8 14.600" stroke="#3a78d8" stroke-width="0.950"/><path d="M8.500 8.700 H14.700 V9.800 H12.400 V13.700 H14.700 V15.200 H8.500 V13.700 H10.800 V9.800 H8.500 Z" fill="#8fd3f6" stroke="#000" stroke-width=".8"/></svg>
<div style="position:absolute;left:374px;top:426px;width:9px;height:1px;background:repeating-linear-gradient(90deg,#808080 0 1px,transparent 1px 2px);"></div>
<div style="position:absolute;left:385px;top:420px;width:12px;height:12px;box-sizing:border-box;border:1.2px solid #000;background:#fff;box-shadow:-1.5px 1.5px 1.2px rgba(0,0,0,.5);"><svg style="position:absolute;left:-1.2px;top:-1.2px" width="12" height="12"><path d="M2.4 5.4 L5 8.6 L9.9 3.3" fill="none" stroke="#000" stroke-width="1.7"/></svg></div>
<svg style="position:absolute;left:400px;top:416px;overflow:visible" width="16" height="16" viewBox="0 0 16 16" ><path d="M0.500 0.500 H7 L15 8.500 V10 H12.800 V13.500 H15 V15.500 H8.200 L0.500 7.800 V6 L1.800 6 L1.800 2.500 L0.500 2.500 Z" fill="#fff" stroke="#111" stroke-width="1.050" stroke-linejoin="miter"/><path d="M1 1 H7 L14.500 8.500 H8.500 Z" fill="#a6dcf8"/><path d="M3.500 1 L11 8.500 H8.500 L1 1 Z" fill="#e8f6fd"/><path d="M1 2.500 L8.300 9.800 V15 L1 7.700 Z" fill="#fff"/><path d="M1.500 3.500 L8 10.300 M1.500 5 L8 11.800 M1.500 6.500 L8 13.300 M2 8.200 L8 14.600" stroke="#3a78d8" stroke-width="0.950"/><path d="M8.500 8.700 H14.700 V9.800 H12.400 V13.700 H14.700 V15.200 H8.500 V13.700 H10.800 V9.800 H8.500 Z" fill="#8fd3f6" stroke="#000" stroke-width=".8"/></svg>
<div style="position:absolute;left:374px;top:444px;width:9px;height:1px;background:repeating-linear-gradient(90deg,#808080 0 1px,transparent 1px 2px);"></div>
<div style="position:absolute;left:385px;top:438px;width:12px;height:12px;box-sizing:border-box;border:1.2px solid #000;background:#fff;box-shadow:-1.5px 1.5px 1.2px rgba(0,0,0,.5);"><svg style="position:absolute;left:-1.2px;top:-1.2px" width="12" height="12"><path d="M2.4 5.4 L5 8.6 L9.9 3.3" fill="none" stroke="#000" stroke-width="1.7"/></svg></div>
<svg style="position:absolute;left:400px;top:434px;overflow:visible" width="16" height="16" viewBox="0 0 16 16" ><path d="M0.500 0.500 H7 L15 8.500 V10 H12.800 V13.500 H15 V15.500 H8.200 L0.500 7.800 V6 L1.800 6 L1.800 2.500 L0.500 2.500 Z" fill="#fff" stroke="#111" stroke-width="1.050" stroke-linejoin="miter"/><path d="M1 1 H7 L14.500 8.500 H8.500 Z" fill="#a6dcf8"/><path d="M3.500 1 L11 8.500 H8.500 L1 1 Z" fill="#e8f6fd"/><path d="M1 2.500 L8.300 9.800 V15 L1 7.700 Z" fill="#fff"/><path d="M1.500 3.500 L8 10.300 M1.500 5 L8 11.800 M1.500 6.500 L8 13.300 M2 8.200 L8 14.600" stroke="#3a78d8" stroke-width="0.950"/><path d="M8.500 8.700 H14.700 V9.800 H12.400 V13.700 H14.700 V15.200 H8.500 V13.700 H10.800 V9.800 H8.500 Z" fill="#8fd3f6" stroke="#000" stroke-width=".8"/></svg>
<div style="position:absolute;left:374px;top:462px;width:9px;height:1px;background:repeating-linear-gradient(90deg,#808080 0 1px,transparent 1px 2px);"></div>
<div style="position:absolute;left:385px;top:456px;width:12px;height:12px;box-sizing:border-box;border:1.2px solid #000;background:#fff;box-shadow:-1.5px 1.5px 1.2px rgba(0,0,0,.5);"><svg style="position:absolute;left:-1.2px;top:-1.2px" width="12" height="12"><path d="M2.4 5.4 L5 8.6 L9.9 3.3" fill="none" stroke="#000" stroke-width="1.7"/></svg></div>
<svg style="position:absolute;left:400px;top:452px;overflow:visible" width="16" height="16" viewBox="0 0 16 16" ><path d="M0.500 0.500 H7 L15 8.500 V10 H12.800 V13.500 H15 V15.500 H8.200 L0.500 7.800 V6 L1.800 6 L1.800 2.500 L0.500 2.500 Z" fill="#fff" stroke="#111" stroke-width="1.050" stroke-linejoin="miter"/><path d="M1 1 H7 L14.500 8.500 H8.500 Z" fill="#a6dcf8"/><path d="M3.500 1 L11 8.500 H8.500 L1 1 Z" fill="#e8f6fd"/><path d="M1 2.500 L8.300 9.800 V15 L1 7.700 Z" fill="#fff"/><path d="M1.500 3.500 L8 10.300 M1.500 5 L8 11.800 M1.500 6.500 L8 13.300 M2 8.200 L8 14.600" stroke="#3a78d8" stroke-width="0.950"/><path d="M8.500 8.700 H14.700 V9.800 H12.400 V13.700 H14.700 V15.200 H8.500 V13.700 H10.800 V9.800 H8.500 Z" fill="#8fd3f6" stroke="#000" stroke-width=".8"/></svg>
<div style="position:absolute;left:374px;top:480px;width:9px;height:1px;background:repeating-linear-gradient(90deg,#808080 0 1px,transparent 1px 2px);"></div>
<div style="position:absolute;left:385px;top:474px;width:12px;height:12px;box-sizing:border-box;border:1.2px solid #000;background:#fff;box-shadow:-1.5px 1.5px 1.2px rgba(0,0,0,.5);"><svg style="position:absolute;left:-1.2px;top:-1.2px" width="12" height="12"><path d="M2.4 5.4 L5 8.6 L9.9 3.3" fill="none" stroke="#000" stroke-width="1.7"/></svg></div>
<svg style="position:absolute;left:400px;top:470px;overflow:visible" width="16" height="16" viewBox="0 0 16 16" ><path d="M0.500 0.500 H7 L15 8.500 V10 H12.800 V13.500 H15 V15.500 H8.200 L0.500 7.800 V6 L1.800 6 L1.800 2.500 L0.500 2.500 Z" fill="#fff" stroke="#111" stroke-width="1.050" stroke-linejoin="miter"/><path d="M1 1 H7 L14.500 8.500 H8.500 Z" fill="#a6dcf8"/><path d="M3.500 1 L11 8.500 H8.500 L1 1 Z" fill="#e8f6fd"/><path d="M1 2.500 L8.300 9.800 V15 L1 7.700 Z" fill="#fff"/><path d="M1.500 3.500 L8 10.300 M1.500 5 L8 11.800 M1.500 6.500 L8 13.300 M2 8.200 L8 14.600" stroke="#3a78d8" stroke-width="0.950"/><path d="M8.500 8.700 H14.700 V9.800 H12.400 V13.700 H14.700 V15.200 H8.500 V13.700 H10.800 V9.800 H8.500 Z" fill="#8fd3f6" stroke="#000" stroke-width=".8"/></svg>
<div style="position:absolute;left:374px;top:498px;width:9px;height:1px;background:repeating-linear-gradient(90deg,#808080 0 1px,transparent 1px 2px);"></div>
<div style="position:absolute;left:385px;top:492px;width:12px;height:12px;box-sizing:border-box;border:1.2px solid #000;background:#fff;box-shadow:-1.5px 1.5px 1.2px rgba(0,0,0,.5);"><svg style="position:absolute;left:-1.2px;top:-1.2px" width="12" height="12"><path d="M2.4 5.4 L5 8.6 L9.9 3.3" fill="none" stroke="#000" stroke-width="1.7"/></svg></div>
<svg style="position:absolute;left:400px;top:488px;overflow:visible" width="16" height="16" viewBox="0 0 16 16" ><path d="M0.500 0.500 H7 L15 8.500 V10 H12.800 V13.500 H15 V15.500 H8.200 L0.500 7.800 V6 L1.800 6 L1.800 2.500 L0.500 2.500 Z" fill="#fff" stroke="#111" stroke-width="1.050" stroke-linejoin="miter"/><path d="M1 1 H7 L14.500 8.500 H8.500 Z" fill="#a6dcf8"/><path d="M3.500 1 L11 8.500 H8.500 L1 1 Z" fill="#e8f6fd"/><path d="M1 2.500 L8.300 9.800 V15 L1 7.700 Z" fill="#fff"/><path d="M1.500 3.500 L8 10.300 M1.500 5 L8 11.800 M1.500 6.500 L8 13.300 M2 8.200 L8 14.600" stroke="#3a78d8" stroke-width="0.950"/><path d="M8.500 8.700 H14.700 V9.800 H12.400 V13.700 H14.700 V15.200 H8.500 V13.700 H10.800 V9.800 H8.500 Z" fill="#8fd3f6" stroke="#000" stroke-width=".8"/></svg>
<svg style="position:absolute;left:349px;top:512px" width="9" height="9"><rect x="0.5" y="0.5" width="8" height="8" fill="#fff" stroke="#757575"/><path d="M2 4.5 H7" stroke="#000" stroke-width="1"/></svg>
<div style="position:absolute;left:359px;top:516px;width:5px;height:1px;background:repeating-linear-gradient(90deg,#808080 0 1px,transparent 1px 2px);"></div>
<div style="position:absolute;left:366px;top:510px;width:12px;height:12px;box-sizing:border-box;border:1.2px solid #000;background:#fff;box-shadow:-1.5px 1.5px 1.2px rgba(0,0,0,.5);"><svg style="position:absolute;left:-1.2px;top:-1.2px" width="12" height="12"><path d="M2.4 5.4 L5 8.6 L9.9 3.3" fill="none" stroke="#000" stroke-width="1.7"/></svg></div>
<svg style="position:absolute;left:381px;top:507px;overflow:visible" width="16" height="16" viewBox="0 0 16 16" ><path d="M0.700 1.200 H12 V2.800 M0.700 1.200 V12.500 H2.200" fill="none" stroke="#9a9a9a" stroke-width="1"/><rect x="2.300" y="2.800" width="12.200" height="12" fill="#fff" stroke="#3a3a3a" stroke-width="1.200"/><rect x="3.700" y="4.200" width="9.400" height="9.200" fill="none" stroke="#c8c8c8" stroke-width=".8"/><path d="M4.800 6.300 L6.300 4.800 H11.800 V10.300 L10.300 11.800 Z" fill="#2b7fd8"/><rect x="4.800" y="6.300" width="5.500" height="5.500" fill="#22c4f2"/></svg>
<svg style="position:absolute;left:368px;top:530px" width="9" height="9"><rect x="0.5" y="0.5" width="8" height="8" fill="#fff" stroke="#757575"/><path d="M2 4.5 H7" stroke="#000" stroke-width="1"/><path d="M4.5 2.5 V6.5" stroke="#000" stroke-width="1"/></svg>
<div style="position:absolute;left:378px;top:534px;width:5px;height:1px;background:repeating-linear-gradient(90deg,#808080 0 1px,transparent 1px 2px);"></div>
<div style="position:absolute;left:385px;top:528px;width:12px;height:12px;box-sizing:border-box;border:1.2px solid #000;background:#fff;box-shadow:-1.5px 1.5px 1.2px rgba(0,0,0,.5);"><svg style="position:absolute;left:-1.2px;top:-1.2px" width="12" height="12"><path d="M2.4 5.4 L5 8.6 L9.9 3.3" fill="none" stroke="#000" stroke-width="1.7"/></svg></div>
<svg style="position:absolute;left:399px;top:525px;overflow:visible" width="16" height="16" viewBox="0 0 16 16" ><path d="M7.600 7 L9.800 7.600 M9 6.500 L10 9" stroke="#8a8a8a" stroke-width="1.300"/><path d="M0.6 3.7 h5.0 l2.0 2.0 v5.0 h-5.0 l-2.0 -2.0 z" fill="#dedede" stroke="#7a7a7a" stroke-width="1" stroke-linejoin="round"/><rect x="2.6" y="5.7" width="5.0" height="5.0" fill="#cacaca" stroke="#7a7a7a" stroke-width="1"/><path d="M8.7 0.2 h5.0 l2.0 2.0 v5.0 h-5.0 l-2.0 -2.0 z" fill="#dedede" stroke="#7a7a7a" stroke-width="1" stroke-linejoin="round"/><rect x="10.7" y="2.2" width="5.0" height="5.0" fill="#cacaca" stroke="#7a7a7a" stroke-width="1"/><path d="M9.2 8.3 h4.6 l2.0 2.0 v4.6 h-4.6 l-2.0 -2.0 z" fill="#7fd0fa" stroke="#7f8a94" stroke-width="1" stroke-linejoin="round"/><rect x="11.2" y="10.3" width="4.6" height="4.6" fill="url(#cy)" stroke="#7f8a94" stroke-width="1"/></svg>
<svg style="position:absolute;left:368px;top:548px" width="9" height="9"><rect x="0.5" y="0.5" width="8" height="8" fill="#fff" stroke="#757575"/><path d="M2 4.5 H7" stroke="#000" stroke-width="1"/></svg>
<div style="position:absolute;left:378px;top:552px;width:5px;height:1px;background:repeating-linear-gradient(90deg,#808080 0 1px,transparent 1px 2px);"></div>
<div style="position:absolute;left:385px;top:546px;width:12px;height:12px;box-sizing:border-box;border:1.2px solid #000;background:#fff;box-shadow:-1.5px 1.5px 1.2px rgba(0,0,0,.5);"><svg style="position:absolute;left:-1.2px;top:-1.2px" width="12" height="12"><path d="M2.4 5.4 L5 8.6 L9.9 3.3" fill="none" stroke="#000" stroke-width="1.7"/></svg></div>
<svg style="position:absolute;left:399px;top:543px;overflow:visible" width="16" height="16" viewBox="0 0 16 16" ><path d="M7.600 7 L9.800 7.600 M9 6.500 L10 9" stroke="#8a8a8a" stroke-width="1.300"/><path d="M0.6 3.7 h5.0 l2.0 2.0 v5.0 h-5.0 l-2.0 -2.0 z" fill="#dedede" stroke="#7a7a7a" stroke-width="1" stroke-linejoin="round"/><rect x="2.6" y="5.7" width="5.0" height="5.0" fill="#cacaca" stroke="#7a7a7a" stroke-width="1"/><path d="M8.7 0.2 h5.0 l2.0 2.0 v5.0 h-5.0 l-2.0 -2.0 z" fill="#dedede" stroke="#7a7a7a" stroke-width="1" stroke-linejoin="round"/><rect x="10.7" y="2.2" width="5.0" height="5.0" fill="#cacaca" stroke="#7a7a7a" stroke-width="1"/><path d="M9.2 8.3 h4.6 l2.0 2.0 v4.6 h-4.6 l-2.0 -2.0 z" fill="#7fd0fa" stroke="#7f8a94" stroke-width="1" stroke-linejoin="round"/><rect x="11.2" y="10.3" width="4.6" height="4.6" fill="url(#cy)" stroke="#7f8a94" stroke-width="1"/></svg>
<div style="position:absolute;left:393px;top:570px;width:9px;height:1px;background:repeating-linear-gradient(90deg,#808080 0 1px,transparent 1px 2px);"></div>
<div style="position:absolute;left:404px;top:564px;width:12px;height:12px;box-sizing:border-box;border:1.2px solid #000;background:#fff;box-shadow:-1.5px 1.5px 1.2px rgba(0,0,0,.5);"><svg style="position:absolute;left:-1.2px;top:-1.2px" width="12" height="12"><path d="M2.4 5.4 L5 8.6 L9.9 3.3" fill="none" stroke="#000" stroke-width="1.7"/></svg></div>
<svg style="position:absolute;left:419px;top:560px;overflow:visible" width="16" height="16" viewBox="0 0 16 16" ><path d="M0.500 0.500 H7 L15 8.500 V10 H12.800 V13.500 H15 V15.500 H8.200 L0.500 7.800 V6 L1.800 6 L1.800 2.500 L0.500 2.500 Z" fill="#fff" stroke="#111" stroke-width="1.050" stroke-linejoin="miter"/><path d="M1 1 H7 L14.500 8.500 H8.500 Z" fill="#a6dcf8"/><path d="M3.500 1 L11 8.500 H8.500 L1 1 Z" fill="#e8f6fd"/><path d="M1 2.500 L8.300 9.800 V15 L1 7.700 Z" fill="#fff"/><path d="M1.500 3.500 L8 10.300 M1.500 5 L8 11.800 M1.500 6.500 L8 13.300 M2 8.200 L8 14.600" stroke="#3a78d8" stroke-width="0.950"/><path d="M8.500 8.700 H14.700 V9.800 H12.400 V13.700 H14.700 V15.200 H8.500 V13.700 H10.800 V9.800 H8.500 Z" fill="#8fd3f6" stroke="#000" stroke-width=".8"/></svg>
<div style="position:absolute;left:393px;top:588px;width:9px;height:1px;background:repeating-linear-gradient(90deg,#808080 0 1px,transparent 1px 2px);"></div>
<div style="position:absolute;left:404px;top:582px;width:12px;height:12px;box-sizing:border-box;border:1.2px solid #000;background:#fff;box-shadow:-1.5px 1.5px 1.2px rgba(0,0,0,.5);"><svg style="position:absolute;left:-1.2px;top:-1.2px" width="12" height="12"><path d="M2.4 5.4 L5 8.6 L9.9 3.3" fill="none" stroke="#000" stroke-width="1.7"/></svg></div>
<svg style="position:absolute;left:419px;top:578px;overflow:visible" width="16" height="16" viewBox="0 0 16 16" ><path d="M1.200 1.500 H12.500 V3 H3 V13 H1.200 Z" fill="#59b7ee" stroke="#555" stroke-width=".8"/><rect x="3.300" y="3.300" width="10.700" height="10.700" fill="url(#shg)" stroke="#1a1a1a" stroke-width="1.200"/></svg>
<div style="position:absolute;left:393px;top:606px;width:9px;height:1px;background:repeating-linear-gradient(90deg,#808080 0 1px,transparent 1px 2px);"></div>
<div style="position:absolute;left:404px;top:600px;width:12px;height:12px;box-sizing:border-box;border:1.2px solid #000;background:#fff;box-shadow:-1.5px 1.5px 1.2px rgba(0,0,0,.5);"><svg style="position:absolute;left:-1.2px;top:-1.2px" width="12" height="12"><path d="M2.4 5.4 L5 8.6 L9.9 3.3" fill="none" stroke="#000" stroke-width="1.7"/></svg></div>
<svg style="position:absolute;left:419px;top:597px;overflow:visible" width="16" height="16" viewBox="0 0 16 16" ><rect x="2.500" y="1" width="9" height="3" fill="#2a5fd0" stroke="#111" stroke-width="1"/><rect x="5" y="4" width="4" height="10" fill="#6fb0f0" stroke="#111" stroke-width="1"/></svg>
<div style="position:absolute;left:334px;top:362px;width:1px;height:5px;background:repeating-linear-gradient(180deg,#808080 0 1px,transparent 1px 2px);"></div>
<div style="position:absolute;left:353px;top:380px;width:1px;height:5px;background:repeating-linear-gradient(180deg,#808080 0 1px,transparent 1px 2px);"></div>
<div style="position:absolute;left:353px;top:396px;width:1px;height:115px;background:repeating-linear-gradient(180deg,#808080 0 1px,transparent 1px 2px);"></div>
<div style="position:absolute;left:372px;top:398px;width:1px;height:101px;background:repeating-linear-gradient(180deg,#808080 0 1px,transparent 1px 2px);"></div>
<div style="position:absolute;left:372px;top:524px;width:1px;height:5px;background:repeating-linear-gradient(180deg,#808080 0 1px,transparent 1px 2px);"></div>
<div style="position:absolute;left:372px;top:540px;width:1px;height:7px;background:repeating-linear-gradient(180deg,#808080 0 1px,transparent 1px 2px);"></div>
<div style="position:absolute;left:391px;top:560px;width:1px;height:41px;background:repeating-linear-gradient(180deg,#808080 0 1px,transparent 1px 2px);"></div>
<div style="position:absolute;left:359px;top:344px;width:145px;height:18px;box-sizing:border-box;border:1px solid #00f0f0;"><div style="position:absolute;left:-1px;top:-1px;right:-1px;bottom:-1px;border:1px dotted #000;"></div></div>
<!--ICONS-->
<span class="t" style="left:4.5px;top:3.02px;font-size:11.5px;letter-spacing:0.061px;color:#26308a;-webkit-text-stroke:0.1px;">3D-Teilestruktur</span>
<span class="t" style="left:14.0px;top:58.52px;font-size:11.5px;letter-spacing:0.000px;color:#10107c;-webkit-text-stroke:0.35px;">Bezeichnung</span>
<span class="t" style="left:272.0px;top:58.52px;font-size:11.5px;letter-spacing:-0.424px;color:#10107c;-webkit-text-stroke:0.35px;">Posi...</span>
<span class="t" style="left:332.4px;top:58.52px;font-size:11.5px;letter-spacing:0.129px;color:#10107c;-webkit-text-stroke:0.35px;">Kommentar</span>
<span class="t" style="left:492.4px;top:58.52px;font-size:11.5px;letter-spacing:0.078px;color:#10107c;-webkit-text-stroke:0.35px;">Benennung 2</span>
<span class="t" style="left:44.4px;top:79.62px;font-size:11.5px;transform:scaleX(0.8947);transform-origin:0 0;color:#1a1a1a;-webkit-text-stroke:0.1px;">FUSSPLATTE_MIT_HUELSE</span>
<span class="t" style="left:60.7px;top:101.62px;font-size:11.5px;letter-spacing:0.301px;color:#1a1a1a;-webkit-text-stroke:0.1px;">Hauptbaugruppe</span>
<span class="t" style="left:313.5px;top:101.62px;font-size:11.5px;letter-spacing:0.169px;color:#1b2b6e;-webkit-text-stroke:0.1px;">Baugruppe</span>
<span class="t" style="left:488.5px;top:101.62px;font-size:11.5px;letter-spacing:-0.227px;color:#1b2b6e;-webkit-text-stroke:0.1px;">x </span>
<span class="t" style="left:497.0px;top:101.62px;font-size:11.5px;letter-spacing:0.344px;color:#1b2b6e;-webkit-text-stroke:0.1px;">Hauptbaugruppe</span>
<span class="t" style="left:78.6px;top:123.62px;font-size:11.5px;letter-spacing:-0.145px;font-weight:bold;color:#e8141c;text-decoration:underline;">Baugruppe</span>
<span class="t" style="left:313.5px;top:123.62px;font-size:11.5px;letter-spacing:0.249px;color:#1b2b6e;-webkit-text-stroke:0.1px;">Strukturbaugruppe</span>
<span class="t" style="left:488.5px;top:123.62px;font-size:11.5px;letter-spacing:-0.227px;color:#1b2b6e;-webkit-text-stroke:0.1px;">x </span>
<span class="t" style="left:497.0px;top:123.62px;font-size:11.5px;letter-spacing:0.169px;color:#1b2b6e;-webkit-text-stroke:0.1px;">Baugruppe</span>
<span class="t" style="left:96.5px;top:145.62px;font-size:11.5px;letter-spacing:0.223px;color:#1a1a1a;-webkit-text-stroke:0.1px;">Baugruppe </span>
<span class="t" style="left:158.2px;top:145.62px;font-size:11.5px;letter-spacing:0.182px;color:#1a1a1a;-webkit-text-stroke:0.1px;">Kopf/Fußpunkt</span>
<span class="t" style="left:268.5px;top:145.62px;font-size:11.5px;letter-spacing:-0.406px;color:#1a1a1a;-webkit-text-stroke:0.1px;">2</span>
<span class="t" style="left:313.5px;top:145.62px;font-size:11.5px;letter-spacing:0.169px;color:#1b2b6e;-webkit-text-stroke:0.1px;">Baugruppe</span>
<span class="t" style="left:489.0px;top:145.62px;font-size:11.5px;letter-spacing:-0.115px;color:#1b2b6e;-webkit-text-stroke:0.1px;">1x </span>
<span class="t" style="left:504.0px;top:145.62px;font-size:11.5px;letter-spacing:0.203px;color:#1b2b6e;-webkit-text-stroke:0.1px;">Baugruppe </span>
<span class="t" style="left:565.5px;top:145.62px;font-size:11.5px;letter-spacing:0.205px;color:#1b2b6e;-webkit-text-stroke:0.1px;">Kopf/Fußpunkt</span>
<span class="t" style="left:115.2px;top:167.62px;font-size:11.5px;letter-spacing:-0.329px;color:#1a1a1a;-webkit-text-stroke:0.1px;">ISO </span>
<span class="t" style="left:136.9px;top:167.62px;font-size:11.5px;letter-spacing:0.213px;color:#1a1a1a;-webkit-text-stroke:0.1px;">10642-M </span>
<span class="t" style="left:187.2px;top:167.62px;font-size:11.5px;letter-spacing:0.004px;color:#1a1a1a;-webkit-text-stroke:0.1px;">8x20-8.8</span>
<span class="t" style="left:268.5px;top:167.62px;font-size:11.5px;letter-spacing:-0.498px;color:#1a1a1a;-webkit-text-stroke:0.1px;">13</span>
<span class="t" style="left:313.5px;top:167.62px;font-size:11.5px;letter-spacing:-0.040px;color:#1b2b6e;-webkit-text-stroke:0.1px;">Senkschraube </span>
<span class="t" style="left:389.7px;top:167.62px;font-size:11.5px;letter-spacing:0.592px;color:#1b2b6e;-webkit-text-stroke:0.1px;">mit </span>
<span class="t" style="left:410.6px;top:167.62px;font-size:11.5px;letter-spacing:-0.125px;color:#1b2b6e;-webkit-text-stroke:0.1px;">Innensechsk...</span>
<span class="t" style="left:488.5px;top:167.62px;font-size:11.5px;letter-spacing:0.052px;color:#1b2b6e;-webkit-text-stroke:0.1px;">4x </span>
<span class="t" style="left:504.0px;top:167.62px;font-size:11.5px;letter-spacing:-0.229px;color:#1b2b6e;-webkit-text-stroke:0.1px;">ISO </span>
<span class="t" style="left:526.1px;top:167.62px;font-size:11.5px;letter-spacing:0.123px;color:#1b2b6e;-webkit-text-stroke:0.1px;">10642-M8x20-8.8</span>
<span class="t" style="left:115.2px;top:189.62px;font-size:11.5px;letter-spacing:-0.329px;color:#1a1a1a;-webkit-text-stroke:0.1px;">ISO </span>
<span class="t" style="left:136.9px;top:189.62px;font-size:11.5px;letter-spacing:0.213px;color:#1a1a1a;-webkit-text-stroke:0.1px;">10642-M </span>
<span class="t" style="left:187.2px;top:189.62px;font-size:11.5px;letter-spacing:0.004px;color:#1a1a1a;-webkit-text-stroke:0.1px;">8x20-8.8</span>
<span class="t" style="left:268.5px;top:189.62px;font-size:11.5px;letter-spacing:-0.498px;color:#1a1a1a;-webkit-text-stroke:0.1px;">13</span>
<span class="t" style="left:313.5px;top:189.62px;font-size:11.5px;letter-spacing:-0.040px;color:#1b2b6e;-webkit-text-stroke:0.1px;">Senkschraube </span>
<span class="t" style="left:389.7px;top:189.62px;font-size:11.5px;letter-spacing:0.592px;color:#1b2b6e;-webkit-text-stroke:0.1px;">mit </span>
<span class="t" style="left:410.6px;top:189.62px;font-size:11.5px;letter-spacing:-0.125px;color:#1b2b6e;-webkit-text-stroke:0.1px;">Innensechsk...</span>
<span class="t" style="left:488.5px;top:189.62px;font-size:11.5px;letter-spacing:0.052px;color:#1b2b6e;-webkit-text-stroke:0.1px;">4x </span>
<span class="t" style="left:504.0px;top:189.62px;font-size:11.5px;letter-spacing:-0.229px;color:#1b2b6e;-webkit-text-stroke:0.1px;">ISO </span>
<span class="t" style="left:526.1px;top:189.62px;font-size:11.5px;letter-spacing:0.123px;color:#1b2b6e;-webkit-text-stroke:0.1px;">10642-M8x20-8.8</span>
<span class="t" style="left:115.2px;top:211.62px;font-size:11.5px;letter-spacing:-0.329px;color:#1a1a1a;-webkit-text-stroke:0.1px;">ISO </span>
<span class="t" style="left:136.9px;top:211.62px;font-size:11.5px;letter-spacing:0.213px;color:#1a1a1a;-webkit-text-stroke:0.1px;">10642-M </span>
<span class="t" style="left:187.2px;top:211.62px;font-size:11.5px;letter-spacing:0.004px;color:#1a1a1a;-webkit-text-stroke:0.1px;">8x20-8.8</span>
<span class="t" style="left:268.5px;top:211.62px;font-size:11.5px;letter-spacing:-0.498px;color:#1a1a1a;-webkit-text-stroke:0.1px;">13</span>
<span class="t" style="left:313.5px;top:211.62px;font-size:11.5px;letter-spacing:-0.040px;color:#1b2b6e;-webkit-text-stroke:0.1px;">Senkschraube </span>
<span class="t" style="left:389.7px;top:211.62px;font-size:11.5px;letter-spacing:0.592px;color:#1b2b6e;-webkit-text-stroke:0.1px;">mit </span>
<span class="t" style="left:410.6px;top:211.62px;font-size:11.5px;letter-spacing:-0.125px;color:#1b2b6e;-webkit-text-stroke:0.1px;">Innensechsk...</span>
<span class="t" style="left:488.5px;top:211.62px;font-size:11.5px;letter-spacing:0.052px;color:#1b2b6e;-webkit-text-stroke:0.1px;">4x </span>
<span class="t" style="left:504.0px;top:211.62px;font-size:11.5px;letter-spacing:-0.229px;color:#1b2b6e;-webkit-text-stroke:0.1px;">ISO </span>
<span class="t" style="left:526.1px;top:211.62px;font-size:11.5px;letter-spacing:0.123px;color:#1b2b6e;-webkit-text-stroke:0.1px;">10642-M8x20-8.8</span>
<span class="t" style="left:115.2px;top:233.62px;font-size:11.5px;letter-spacing:-0.329px;color:#1a1a1a;-webkit-text-stroke:0.1px;">ISO </span>
<span class="t" style="left:136.9px;top:233.62px;font-size:11.5px;letter-spacing:0.213px;color:#1a1a1a;-webkit-text-stroke:0.1px;">10642-M </span>
<span class="t" style="left:187.2px;top:233.62px;font-size:11.5px;letter-spacing:0.004px;color:#1a1a1a;-webkit-text-stroke:0.1px;">8x20-8.8</span>
<span class="t" style="left:268.5px;top:233.62px;font-size:11.5px;letter-spacing:-0.498px;color:#1a1a1a;-webkit-text-stroke:0.1px;">13</span>
<span class="t" style="left:313.5px;top:233.62px;font-size:11.5px;letter-spacing:-0.040px;color:#1b2b6e;-webkit-text-stroke:0.1px;">Senkschraube </span>
<span class="t" style="left:389.7px;top:233.62px;font-size:11.5px;letter-spacing:0.592px;color:#1b2b6e;-webkit-text-stroke:0.1px;">mit </span>
<span class="t" style="left:410.6px;top:233.62px;font-size:11.5px;letter-spacing:-0.125px;color:#1b2b6e;-webkit-text-stroke:0.1px;">Innensechsk...</span>
<span class="t" style="left:488.5px;top:233.62px;font-size:11.5px;letter-spacing:0.052px;color:#1b2b6e;-webkit-text-stroke:0.1px;">4x </span>
<span class="t" style="left:504.0px;top:233.62px;font-size:11.5px;letter-spacing:-0.229px;color:#1b2b6e;-webkit-text-stroke:0.1px;">ISO </span>
<span class="t" style="left:526.1px;top:233.62px;font-size:11.5px;letter-spacing:0.123px;color:#1b2b6e;-webkit-text-stroke:0.1px;">10642-M8x20-8.8</span>
<span class="t" style="left:114.7px;top:255.62px;font-size:11.5px;letter-spacing:-0.494px;color:#1a1a1a;-webkit-text-stroke:0.1px;">SC  </span>
<span class="t" style="left:135.1px;top:255.62px;font-size:11.5px;letter-spacing:-0.046px;color:#1a1a1a;-webkit-text-stroke:0.1px;">322750</span>
<span class="t" style="left:268.5px;top:255.62px;font-size:11.5px;letter-spacing:-0.406px;color:#1a1a1a;-webkit-text-stroke:0.1px;">7</span>
<span class="t" style="left:313.5px;top:255.62px;font-size:11.5px;letter-spacing:0.176px;color:#1b2b6e;-webkit-text-stroke:0.1px;">Insert </span>
<span class="t" style="left:346.7px;top:255.62px;font-size:11.5px;letter-spacing:0.188px;color:#1b2b6e;-webkit-text-stroke:0.1px;">Profile </span>
<span class="t" style="left:384.0px;top:255.62px;font-size:11.5px;letter-spacing:-0.312px;color:#1b2b6e;-webkit-text-stroke:0.1px;">Pf150</span>
<span class="t" style="left:489.0px;top:255.62px;font-size:11.5px;letter-spacing:-0.115px;color:#1b2b6e;-webkit-text-stroke:0.1px;">1x </span>
<span class="t" style="left:504.0px;top:255.62px;font-size:11.5px;letter-spacing:-0.569px;color:#1b2b6e;-webkit-text-stroke:0.1px;">SC  </span>
<span class="t" style="left:524.1px;top:255.62px;font-size:11.5px;letter-spacing:0.102px;color:#1b2b6e;-webkit-text-stroke:0.1px;">322750-200.000 </span>
<span class="t" style="left:612.6px;top:255.62px;font-size:11.5px;letter-spacing:0.144px;color:#1b2b6e;-webkit-text-stroke:0.1px;">Leichtmetall</span>
<span class="t" style="left:114.7px;top:277.62px;font-size:11.5px;letter-spacing:-0.107px;color:#1a1a1a;-webkit-text-stroke:0.1px;">Bl </span>
<span class="t" style="left:127.8px;top:277.62px;font-size:11.5px;letter-spacing:-0.498px;color:#1a1a1a;-webkit-text-stroke:0.1px;">10</span>
<span class="t" style="left:268.5px;top:277.62px;font-size:11.5px;letter-spacing:-0.406px;color:#1a1a1a;-webkit-text-stroke:0.1px;">3</span>
<span class="t" style="left:313.5px;top:277.62px;font-size:11.5px;letter-spacing:-0.279px;color:#1b2b6e;-webkit-text-stroke:0.1px;">Bleche</span>
<span class="t" style="left:489.0px;top:277.62px;font-size:11.5px;letter-spacing:-0.115px;color:#1b2b6e;-webkit-text-stroke:0.1px;">1x </span>
<span class="t" style="left:504.0px;top:277.62px;font-size:11.5px;letter-spacing:-0.141px;color:#1b2b6e;-webkit-text-stroke:0.1px;">Bl </span>
<span class="t" style="left:517.0px;top:277.62px;font-size:11.5px;letter-spacing:-0.039px;color:#1b2b6e;-webkit-text-stroke:0.1px;">10x250.000x200.000 </span>
<span class="t" style="left:626.9px;top:277.62px;font-size:11.5px;letter-spacing:-0.687px;color:#1b2b6e;-webkit-text-stroke:0.1px;">S235JR</span>
<span class="t" style="left:8.0px;top:310.02px;font-size:11.5px;letter-spacing:0.092px;color:#26308a;-webkit-text-stroke:0.1px;">2D-Teilestruktur</span>
<span class="t" style="left:103.5px;top:310.02px;font-size:11.5px;letter-spacing:0.154px;color:#26308a;-webkit-text-stroke:0.1px;">3D-Teilestruktur</span>
<span class="t" style="left:322.0px;top:306.34px;font-size:10px;letter-spacing:0.252px;font-weight:bold;color:#111;-webkit-text-stroke:0.1px;">3D</span>
<span class="t" style="left:365.3px;top:306.34px;font-size:10px;letter-spacing:-0.598px;color:#1a1a70;-webkit-text-stroke:0.1px;">2D</span>
<span class="t" style="left:311.5px;top:326.99px;font-size:11px;letter-spacing:-0.247px;color:#000;-webkit-text-stroke:0.1px;">Viewer Ansicht</span>
<span class="t" style="left:360.9px;top:345.98px;font-size:11.6px;transform:scaleX(0.8823);transform-origin:0 0;color:#ff0000;-webkit-text-stroke:0.05px;">FUSSPLATTE_MIT_HUELSE</span>
<span class="t" style="left:380.4px;top:363.98px;font-size:11.6px;letter-spacing:0.279px;color:#000;-webkit-text-stroke:0.05px;">Hauptbaugruppe </span>
<span class="t" style="left:474.2px;top:363.98px;font-size:11.6px;letter-spacing:0.160px;color:#000;-webkit-text-stroke:0.05px;">{Baugruppe}{}</span>
<span class="t" style="left:399.9px;top:381.98px;font-size:11.6px;letter-spacing:-0.081px;color:#000;-webkit-text-stroke:0.05px;">Pfosten </span>
<span class="t" style="left:441.8px;top:381.98px;font-size:11.6px;letter-spacing:0.053px;color:#000;-webkit-text-stroke:0.05px;">{Pfosten}{0}</span>
<span class="t" style="left:418.8px;top:399.98px;font-size:11.6px;letter-spacing:-0.841px;color:#000;-webkit-text-stroke:0.05px;">SC  </span>
<span class="t" style="left:438.0px;top:399.98px;font-size:11.6px;letter-spacing:-0.389px;color:#000;-webkit-text-stroke:0.05px;">204691 </span>
<span class="t" style="left:477.2px;top:399.98px;font-size:11.6px;letter-spacing:-0.094px;color:#000;-webkit-text-stroke:0.05px;">{Glasanl.dtg.13mm </span>
<span class="t" style="left:576.7px;top:399.98px;font-size:11.6px;letter-spacing:0.544px;color:#000;-webkit-text-stroke:0.05px;">rs}{5}</span>
<span class="t" style="left:418.8px;top:417.98px;font-size:11.6px;letter-spacing:-0.841px;color:#000;-webkit-text-stroke:0.05px;">SC  </span>
<span class="t" style="left:438.0px;top:417.98px;font-size:11.6px;letter-spacing:-0.389px;color:#000;-webkit-text-stroke:0.05px;">204691 </span>
<span class="t" style="left:477.2px;top:417.98px;font-size:11.6px;letter-spacing:-0.094px;color:#000;-webkit-text-stroke:0.05px;">{Glasanl.dtg.13mm </span>
<span class="t" style="left:576.7px;top:417.98px;font-size:11.6px;letter-spacing:0.544px;color:#000;-webkit-text-stroke:0.05px;">rs}{5}</span>
<span class="t" style="left:418.8px;top:435.98px;font-size:11.6px;letter-spacing:-0.841px;color:#000;-webkit-text-stroke:0.05px;">SC  </span>
<span class="t" style="left:438.0px;top:435.98px;font-size:11.6px;letter-spacing:-0.389px;color:#000;-webkit-text-stroke:0.05px;">224848 </span>
<span class="t" style="left:477.2px;top:435.98px;font-size:11.6px;letter-spacing:0.245px;color:#000;-webkit-text-stroke:0.05px;">{Glasdichtung </span>
<span class="t" style="left:555.4px;top:435.98px;font-size:11.6px;letter-spacing:-0.215px;color:#000;-webkit-text-stroke:0.05px;">Aussen}{6}</span>
<span class="t" style="left:418.8px;top:453.98px;font-size:11.6px;letter-spacing:-0.841px;color:#000;-webkit-text-stroke:0.05px;">SC  </span>
<span class="t" style="left:438.0px;top:453.98px;font-size:11.6px;letter-spacing:-0.389px;color:#000;-webkit-text-stroke:0.05px;">224809 </span>
<span class="t" style="left:477.2px;top:453.98px;font-size:11.6px;letter-spacing:0.259px;color:#000;-webkit-text-stroke:0.05px;">{Isolatorprofil </span>
<span class="t" style="left:551.6px;top:453.98px;font-size:11.6px;letter-spacing:0.165px;color:#000;-webkit-text-stroke:0.05px;">25mm}{8}</span>
<span class="t" style="left:418.8px;top:471.98px;font-size:11.6px;letter-spacing:-0.841px;color:#000;-webkit-text-stroke:0.05px;">SC  </span>
<span class="t" style="left:438.0px;top:471.98px;font-size:11.6px;letter-spacing:-0.389px;color:#000;-webkit-text-stroke:0.05px;">322280 </span>
<span class="t" style="left:477.2px;top:471.98px;font-size:11.6px;letter-spacing:0.186px;color:#000;-webkit-text-stroke:0.05px;">{Pfosten </span>
<span class="t" style="left:525.3px;top:471.98px;font-size:11.6px;letter-spacing:-0.026px;color:#000;-webkit-text-stroke:0.05px;">105mm}{9}</span>
<span class="t" style="left:418.8px;top:489.98px;font-size:11.6px;letter-spacing:-0.841px;color:#000;-webkit-text-stroke:0.05px;">SC  </span>
<span class="t" style="left:438.0px;top:489.98px;font-size:11.6px;letter-spacing:-0.389px;color:#000;-webkit-text-stroke:0.05px;">322850 </span>
<span class="t" style="left:477.2px;top:489.98px;font-size:11.6px;letter-spacing:-0.072px;color:#000;-webkit-text-stroke:0.05px;">{Deckschale}{4}</span>
<span class="t" style="left:399.9px;top:507.98px;font-size:11.6px;letter-spacing:0.012px;color:#000;-webkit-text-stroke:0.05px;">Baugruppe  </span>
<span class="t" style="left:463.2px;top:507.98px;font-size:11.6px;letter-spacing:0.218px;color:#000;-webkit-text-stroke:0.05px;">{Strukturbaugruppe}{}</span>
<span class="t" style="left:418.8px;top:525.98px;font-size:11.6px;letter-spacing:-0.415px;color:#000;-webkit-text-stroke:0.05px;">Lose </span>
<span class="t" style="left:445.1px;top:525.98px;font-size:11.6px;letter-spacing:-0.246px;color:#000;-webkit-text-stroke:0.05px;">Teile </span>
<span class="t" style="left:470.7px;top:525.98px;font-size:11.6px;letter-spacing:0.199px;color:#000;-webkit-text-stroke:0.05px;">{Baugruppe}{}</span>
<span class="t" style="left:418.4px;top:543.98px;font-size:11.6px;letter-spacing:0.205px;color:#000;-webkit-text-stroke:0.05px;">Baugruppe </span>
<span class="t" style="left:480.4px;top:543.98px;font-size:11.6px;letter-spacing:0.274px;color:#000;-webkit-text-stroke:0.05px;">Kopf/Fußpunkt </span>
<span class="t" style="left:563.5px;top:543.98px;font-size:11.6px;letter-spacing:0.095px;color:#000;-webkit-text-stroke:0.05px;">{Baugruppe}{2}</span>
<span class="t" style="left:437.6px;top:561.98px;font-size:11.6px;letter-spacing:-0.541px;color:#000;-webkit-text-stroke:0.05px;">SC  </span>
<span class="t" style="left:458.0px;top:561.98px;font-size:11.6px;letter-spacing:-0.417px;color:#000;-webkit-text-stroke:0.05px;">322750 </span>
<span class="t" style="left:497.0px;top:561.98px;font-size:11.6px;letter-spacing:-0.387px;color:#000;-webkit-text-stroke:0.05px;">{Insert </span>
<span class="t" style="left:530.0px;top:561.98px;font-size:11.6px;letter-spacing:-0.024px;color:#000;-webkit-text-stroke:0.05px;">Profile </span>
<span class="t" style="left:565.9px;top:561.98px;font-size:11.6px;letter-spacing:0.258px;color:#000;-webkit-text-stroke:0.05px;">Pf150}{7}</span>
<span class="t" style="left:437.6px;top:579.98px;font-size:11.6px;letter-spacing:-0.210px;color:#000;-webkit-text-stroke:0.05px;">Bl </span>
<span class="t" style="left:450.5px;top:579.98px;font-size:11.6px;letter-spacing:-0.275px;color:#000;-webkit-text-stroke:0.05px;">10 </span>
<span class="t" style="left:465.8px;top:579.98px;font-size:11.6px;letter-spacing:-0.090px;color:#000;-webkit-text-stroke:0.05px;">{Bleche}{3}</span>
<span class="t" style="left:437.6px;top:597.28px;font-size:11.6px;letter-spacing:-0.054px;color:#000;-webkit-text-stroke:0.05px;">ISO 10642-M 8x20-8.8 {Senkschraube mit Innensechskant}{13}</span>
</body></html>
